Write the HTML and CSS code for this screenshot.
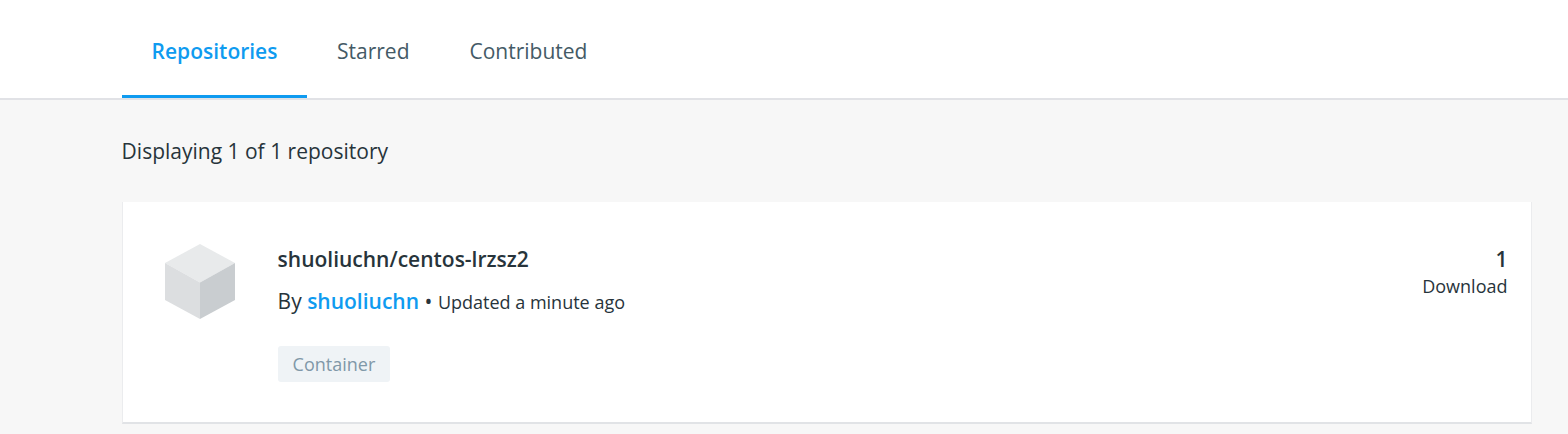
FILE: index.html
```html
<!DOCTYPE html>
<html lang="en">
<head>
<meta charset="utf-8">
<title>Repositories</title>
<link rel="stylesheet" href="styles.css">
</head>
<body>
<nav class="tabs">
  <a class="tab active">Repositories</a>
  <a class="tab">Starred</a>
  <a class="tab">Contributed</a>
</nav>
<main class="content">
  <p class="summary">Displaying 1 of 1 repository</p>
  <article class="card">
    <svg class="cube" viewBox="0 0 70 75" width="70" height="75">
      <path fill="#e8eaeb" d="M35 0L70 19 35 38.5 0 19z"/>
      <path fill="#dcdee0" d="M0 19L35 38.5V75L0 56z"/>
      <path fill="#c9cdd0" d="M70 19L35 38.5V75L70 56z"/>
    </svg>
    <div class="info">
      <h2 class="name">shuoliuchn/centos-lrzsz2</h2>
      <div class="meta"><span>By</span> <a class="owner">shuoliuchn</a> <span class="dot">•</span> <span class="updated">Updated a minute ago</span></div>
      <span class="tag">Container</span>
    </div>
    <div class="stats">
      <div class="count">1</div>
      <div class="label">Download</div>
    </div>
  </article>
</main>
</body>
</html>
```
FILE: styles.css
```css
* { box-sizing: border-box; }
body { margin: 0; height: 434px; overflow: hidden; background: #f7f7f7; color: #27343b; font-family: "Open Sans", sans-serif; font-size: 21px; }
.tabs { display: flex; height: 100px; padding-left: 122px; background: #fff; border-bottom: 2px solid #e1e2e6; }
.tab { padding: 36px 30px 0; line-height: 30px; color: #445a66; border-bottom: 3px solid transparent; height: 98px; }
.active { width: 185px; padding-left: 29.6px; color: #0f9bf0; font-weight: 600; border-color: #0f9bf0; }
.content { padding: 36px 36px 0 121.6px; }
.summary { margin: 0 0 36px; line-height: 30px; }
.card { display: flex; height: 222px; padding: 42px 23.5px 0 42.4px; background: #fff; border: solid #ebecee; border-width: 0 1px 2px; border-bottom-color: #e1e3e6; }
.cube { flex: none; }
.info { padding-left: 42.6px; flex: 1; }
.name { margin: 0; font-size: 21px; font-weight: 600; line-height: 30px; }
.meta { margin-top: 12px; line-height: 30px; }
.owner { color: #0f9bf0; font-weight: 600; }
.updated { font-size: 18px; }
.tag { display: inline-block; margin-top: 29px; width: 112px; height: 36px; padding: 0 15px; border-radius: 3px; background: #eff3f6; color: #8098a8; font-size: 18px; line-height: 36px; }
.stats { text-align: right; }
.count { font-weight: 600; line-height: 30px; }
.label { font-size: 18px; line-height: 24px; }
```
